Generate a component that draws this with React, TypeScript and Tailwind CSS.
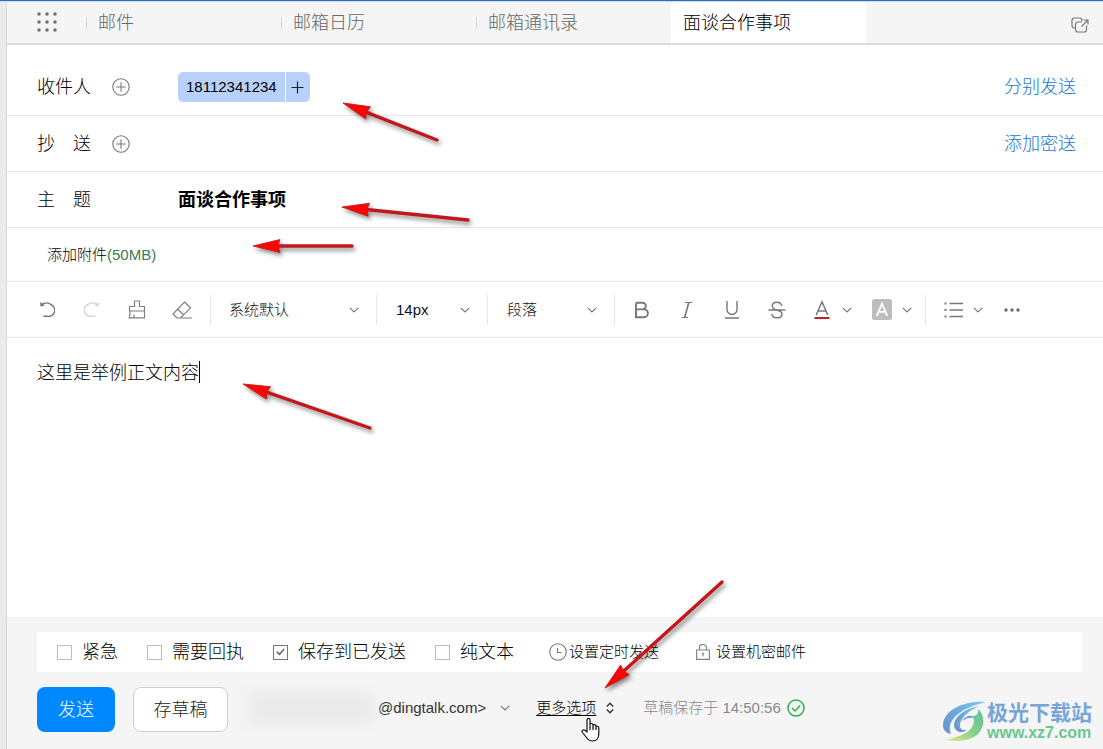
import React, { useState } from 'react';

// アイコン共通
const Chevron = ({ className = '' }: { className?: string }) => (
  <svg className={className} width="10" height="6" viewBox="0 0 10 6" fill="none" stroke="#777" strokeWidth="1.1">
    <path d="M0.8 0.8 L5 5 L9.2 0.8" />
  </svg>
);

const PlusCircle = () => (
  <svg width="18" height="18" viewBox="0 0 18 18" fill="none" stroke="#777" strokeWidth="1.1">
    <circle cx="9" cy="9" r="8.2" />
    <path d="M9 4.2 V13.8 M4.2 9 H13.8" />
  </svg>
);

const GridDots = () => (
  <svg width="20" height="20" viewBox="0 0 20 20" fill="#6b6b6b">
    {[0, 8, 16].map((y) => [0, 8, 16].map((x) => <rect key={`${x}-${y}`} x={x + 0.5} y={y + 0.5} width="3" height="3" rx="0.6" />))}
  </svg>
);

const PopOut = () => (
  <svg width="18" height="16" viewBox="0 0 18 16" fill="none" stroke="#777" strokeWidth="1.2">
    <path d="M4.5 11 H3.5 Q1 11 1 8.5 V3.5 Q1 1 3.5 1 H8.5 Q11 1 11 3.5 V4" />
    <path d="M11 5 H7 Q4.5 5 4.5 7.5 V12.5 Q4.5 15 7 15 H13 Q15.5 15 15.5 12.5 V8.5" />
    <path d="M10.5 9.5 L17 3 M12.5 3 H17 V7.5" />
  </svg>
);

interface ToolProps {
  label: string;
  children: React.ReactNode;
}

const Tool: React.FC<ToolProps> = ({ label, children }) => (
  <button type="button" aria-label={label} className="flex h-9 w-9 items-center justify-center">
    {children}
  </button>
);

const Divider = () => <span className="h-[30px] w-px bg-[#e5e5e5]" />;

interface PickerProps {
  label: string;
  options: string[];
  className: string;
}

const Picker: React.FC<PickerProps> = ({ label, options, className }) => (
  <div className={`relative flex items-center ${className}`}>
    <select aria-label={label} className="w-full appearance-none bg-transparent text-[15px] leading-6 text-[#111] outline-none">
      {options.map((o) => (
        <option key={o}>{o}</option>
      ))}
    </select>
    <Chevron className="pointer-events-none absolute right-[17px]" />
  </div>
);

interface CheckProps {
  label: string;
  defaultChecked?: boolean;
}

const Check: React.FC<CheckProps> = ({ label, defaultChecked = false }) => (
  <label className="flex items-center gap-2.5">
    <span className="grid place-items-center">
      <input
        type="checkbox"
        defaultChecked={defaultChecked}
        className="peer col-start-1 row-start-1 size-[15px] appearance-none border border-[#bdbdbd] bg-white checked:border-[#777]"
      />
      <svg className="pointer-events-none invisible col-start-1 row-start-1 peer-checked:visible" width="9" height="8" viewBox="0 0 9 8" fill="none" stroke="#666" strokeWidth="1.5">
        <path d="M0.8 3.6 L3.5 6.3 L8.2 1" />
      </svg>
    </span>
    {label}
  </label>
);

// 赤い矢印 (先端 → 末尾)
const arrows = [
  { tip: [343, 102], tail: [437, 139] },
  { tip: [342, 206], tail: [468, 219] },
  { tip: [253, 245], tail: [352, 245] },
  { tip: [243, 383], tail: [370, 427] },
  { tip: [605, 687], tail: [722, 581] },
];

const Arrows = () => (
  <svg className="pointer-events-none absolute inset-0 size-full drop-shadow-[2px_3px_2px_rgba(0,0,0,0.45)]">
    {arrows.map(({ tip, tail }) => {
      const dx = tail[0] - tip[0];
      const dy = tail[1] - tip[1];
      const angle = (Math.atan2(dy, dx) * 180) / Math.PI;
      const len = Math.hypot(dx, dy);
      return (
        <g key={tip.join()} transform={`translate(${tip[0]} ${tip[1]}) rotate(${angle})`}>
          <path d={`M22 0 H${len}`} stroke="#c3171b" strokeWidth="3.4" strokeLinecap="round" />
          <path d="M0 0 L27 -6.5 L25 0 L27 6.5 Z" fill="#fb0505" stroke="#c3171b" strokeWidth="0.8" />
        </g>
      );
    })}
  </svg>
);

const Watermark = () => (
  <div className="pointer-events-none absolute right-[11px] bottom-[7px] flex items-center gap-px">
    <svg width="44" height="41" viewBox="0 0 44 41">
      <defs>
        <linearGradient id="wmBlue" x1="0" y1="1" x2="1" y2="0">
          <stop offset="0" stopColor="#6f8fcb" />
          <stop offset="0.5" stopColor="#68a8df" />
          <stop offset="1" stopColor="#7fcdec" />
        </linearGradient>
        <linearGradient id="wmGreen" x1="0" y1="1" x2="1" y2="0">
          <stop offset="0" stopColor="#e3ea8c" />
          <stop offset="0.5" stopColor="#86d088" />
          <stop offset="1" stopColor="#62bfa0" />
        </linearGradient>
      </defs>
      <path d="M44 1 C28 -1 2 6 1 24 C1 29 4 32 9 33 C4 22 14 8 44 1 Z" fill="url(#wmBlue)" />
      <path d="M38 5 C24 7 12 15 12 25 C13 31 20 33 25 29 C20 30 17 27 18 23 C20 15 28 9 38 5 Z" fill="url(#wmBlue)" />
      <path d="M20 20 C23 15 30 13 33 17 C29 16 24 17 20 20 Z" fill="#6a9fd6" />
      <path d="M30 15 C34 20 31 27 25 31 C19 35 12 37 3 39 C20 42 36 38 40 27 C43 20 41 12 36 8 C37 12 35 15 30 15 Z" fill="url(#wmGreen)" />
    </svg>
    <div className="flex flex-col">
      <span className="text-[21px] leading-[22px] font-bold text-[#76a5da]">极光下载站</span>
      <span className="text-base leading-[18px] font-bold text-[#6cc690]">www.xz7.com</span>
    </div>
  </div>
);

const tabs = ['邮件', '邮箱日历', '邮箱通讯录'];

const App: React.FC = () => {
  const [subject, setSubject] = useState<string>('面谈合作事项');
  const [body, setBody] = useState<string>('这里是举例正文内容');

  return (
    <div className="relative flex min-h-screen flex-col border-t border-[#2f6cb3] bg-white font-['Liberation_Sans','Noto_Sans_CJK_SC',sans-serif] text-lg leading-6 font-light text-black">
      <div className="flex flex-1 border-t border-[#c9e0f7]">
        <div className="w-[7px] border-r border-[#d8d8d8] bg-[#ebebeb]" />
        <div className="flex min-w-0 flex-1 flex-col">
          {/* タブ */}
          <header className="flex h-[43px] border-b-2 border-[#dcdcdc] bg-[#f5f5f5] text-[#666]">
            <button type="button" aria-label="应用" className="flex w-[79px] items-center justify-center pb-0.5">
              <GridDots />
            </button>
            <nav className="flex">
              {tabs.map((t) => (
                <button key={t} type="button" className="flex w-[195px] items-center gap-[11px]">
                  <span className="h-3 w-px bg-[#d5d5d5]" />
                  {t}
                </button>
              ))}
              <button type="button" className="w-[195px] rounded-t-sm bg-white pl-3 text-left text-black">
                面谈合作事项
              </button>
            </nav>
            <button type="button" aria-label="新窗口" className="mr-3.5 ml-auto pt-1">
              <PopOut />
            </button>
          </header>

          {/* 宛先 */}
          <section className="flex h-[71px] items-center border-b border-[#e5e5e5] pt-3.5 pr-[27px] pl-[30px]">
            <span className="w-[75px]">收件人</span>
            <button type="button" aria-label="添加收件人" className="w-[66px]">
              <PlusCircle />
            </button>
            <div className="flex h-[30px] items-center rounded-[5px] bg-[#b7d1fa] text-[15px] font-normal">
              <span className="px-2">18112341234</span>
              <button type="button" aria-label="添加" className="flex h-full w-[25px] items-center justify-center border-l border-white">
                <svg width="13" height="13" viewBox="0 0 13 13" stroke="#222" strokeWidth="1.2">
                  <path d="M6.5 0.5 V12.5 M0.5 6.5 H12.5" />
                </svg>
              </button>
            </div>
            <a href="#" className="ml-auto text-[#1677d2]">分别发送</a>
          </section>

          {/* CC */}
          <section className="flex h-14 items-center border-b border-[#e5e5e5] pr-[27px] pl-[30px]">
            <span className="w-[75px]">抄　送</span>
            <button type="button" aria-label="添加抄送" className="w-[66px]">
              <PlusCircle />
            </button>
            <a href="#" className="ml-auto text-[#1677d2]">添加密送</a>
          </section>

          {/* 件名 */}
          <section className="flex h-14 items-center border-b border-[#e5e5e5] pr-[27px] pl-[30px]">
            <label htmlFor="subject" className="w-[141px]">主　题</label>
            <input
              id="subject"
              type="text"
              value={subject}
              onChange={(e) => setSubject(e.target.value)}
              className="flex-1 font-bold outline-none"
            />
          </section>

          <section className="flex h-[54px] items-center border-b border-[#e5e5e5] pl-10 text-[15px]">
            <button type="button">
              添加附件<span className="text-[#3d7a52]">(50MB)</span>
            </button>
          </section>

          {/* ツールバー */}
          <div className="flex h-14 items-center border-b border-[#e5e5e5] pl-[22px] text-[#777]">
            <div className="mr-2.5 flex gap-[9px]">
              <Tool label="撤销">
                <svg width="16" height="17" viewBox="0 0 16 17" fill="none" stroke="#777" strokeWidth="1.4">
                  <path d="M2.5 3.5 C5.5 1.5 9.5 1.3 12 3.5 A6.2 6.2 0 0 1 8 15.2 H4.5" />
                  <path d="M1 1 L1.5 5.6 L6 4.6 Z" fill="#777" stroke="none" />
                </svg>
              </Tool>
              <Tool label="重做">
                <svg width="16" height="17" viewBox="0 0 16 17" fill="none" stroke="#d5d5d5" strokeWidth="1.4">
                  <path d="M13.5 3.5 C10.5 1.5 6.5 1.3 4 3.5 A6.2 6.2 0 0 0 8 15.2 H11.5" />
                  <path d="M15 1 L14.5 5.6 L10 4.6 Z" fill="#d5d5d5" stroke="none" />
                </svg>
              </Tool>
              <Tool label="格式刷">
                <svg width="18" height="19" viewBox="0 0 18 19" fill="none" stroke="#808080" strokeWidth="1.2">
                  <path d="M1.5 11 V6.5 H6.5 V1 H11.5 V6.5 H16.5 V11 Z" />
                  <path d="M2 11 V14 L1.2 17.8 H16.5 V11 M6 17.5 V14.5" />
                </svg>
              </Tool>
              <Tool label="清除格式">
                <svg width="20" height="18" viewBox="0 0 20 18" fill="none" stroke="#808080" strokeWidth="1.2">
                  <path d="M12.5 1 L18.5 6.8 L8.5 17 H5 L1 13 Z M5.5 8.2 L12 14 M8 17 H20" />
                </svg>
              </Tool>
            </div>
            <Divider />
            <Picker label="字体" options={['系统默认', '宋体', '黑体']} className="w-[165px] pl-[18px]" />
            <Divider />
            <Picker label="字号" options={['14px', '16px', '18px']} className="w-[110px] pl-[19px]" />
            <Divider />
            <Picker label="段落" options={['段落', '标题 1', '标题 2']} className="w-[126px] pl-[19px]" />
            <Divider />
            <div className="mx-[9px] flex gap-[9px]">
              <Tool label="加粗">
                <svg width="16" height="18" viewBox="0 0 16 18" fill="none" stroke="#777" strokeWidth="1.9">
                  <path d="M2 1.8 H8.5 A3.3 3.3 0 0 1 8.5 8.4 H2 M8.5 8.4 H10 A3.9 3.9 0 0 1 10 16.2 H2 V1.8" />
                </svg>
              </Tool>
              <Tool label="斜体">
                <svg width="12" height="18" viewBox="0 0 12 18" fill="none" stroke="#777" strokeWidth="1.2">
                  <path d="M4 1.5 H11 M0.5 16.5 H7" />
                  <path d="M7.8 1.5 L3.6 16.5" strokeWidth="1.6" />
                </svg>
              </Tool>
              <Tool label="下划线">
                <svg width="16" height="20" viewBox="0 0 16 20" fill="none" stroke="#777" strokeWidth="1.4">
                  <path d="M3 1 V9.5 A5 5 0 0 0 13 9.5 V1 M1 18 H15" />
                </svg>
              </Tool>
              <Tool label="删除线">
                <svg width="18" height="18" viewBox="0 0 18 18" fill="none" stroke="#777" strokeWidth="1.4">
                  <path d="M13.8 5 C13.3 2.5 11.5 1.2 9 1.2 C6 1.2 4.2 2.8 4.2 5 C4.2 7.2 6 8.2 9 9 C12.5 9.9 14 10.8 14 13 C14 15.4 12 16.8 9 16.8 C6 16.8 4.2 15.4 3.9 12.8 M0.5 9 H17.5" />
                </svg>
              </Tool>
            </div>
            <Tool label="文字颜色">
              <svg width="16" height="20" viewBox="0 0 16 20" fill="none" stroke="#777" strokeWidth="1.5">
                <path d="M2.2 15 L8 1.8 L13.8 15 M4.2 11 H11.8" />
                <path d="M0.5 18 H15.5" stroke="#c81e1e" strokeWidth="2" />
              </svg>
            </Tool>
            <button type="button" aria-label="更多文字颜色" className="flex w-3.5 justify-center">
              <Chevron />
            </button>
            <span className="w-2.5" />
            <Tool label="背景颜色">
              <svg width="20" height="21" viewBox="0 0 20 21" fill="none" stroke="#fff" strokeWidth="1.8">
                <rect width="20" height="21" rx="2.5" fill="#bdbdbd" stroke="none" />
                <path d="M4.8 16.8 L10 4.6 L15.2 16.8 M6.8 12.8 H13.2" />
              </svg>
            </Tool>
            <button type="button" aria-label="更多背景颜色" className="mr-[11px] flex w-3.5 justify-center">
              <Chevron />
            </button>
            <Divider />
            <span className="w-[9px]" />
            <Tool label="列表">
              <svg width="19" height="16" viewBox="0 0 19 16" fill="none" stroke="#777" strokeWidth="1.3">
                <path d="M5.5 1.5 H19 M5.5 8 H19 M5.5 14.5 H19" />
                <path d="M0.5 1.5 H2.5 M0.5 8 H2.5 M0.5 14.5 H2.5" strokeWidth="2" />
              </svg>
            </Tool>
            <button type="button" aria-label="更多列表" className="mr-[9px] flex w-3.5 justify-center">
              <Chevron />
            </button>
            <Tool label="更多">
              <svg width="16" height="4" viewBox="0 0 16 4" fill="#6b6b6b">
                <circle cx="2" cy="2" r="1.7" />
                <circle cx="8" cy="2" r="1.7" />
                <circle cx="14" cy="2" r="1.7" />
              </svg>
            </Tool>
          </div>

          {/* 本文 */}
          <main className="flex flex-1 items-start pt-[23px] pr-6 pl-[30px]">
            <textarea
              aria-label="正文"
              rows={1}
              value={body}
              onChange={(e) => setBody(e.target.value)}
              className="field-sizing-content resize-none caret-transparent outline-none"
            />
            <span className="h-[22px] w-px bg-black" />
          </main>

          {/* フッター */}
          <footer className="flex flex-col gap-[15px] bg-[#f5f5f5] pt-[15px] pr-[21px] pb-[17px] pl-[30px]">
            <div className="flex h-10 items-center bg-white pl-5">
              <div className="flex gap-[29px]">
                <Check label="紧急" />
                <Check label="需要回执" />
                <Check label="保存到已发送" defaultChecked />
                <Check label="纯文本" />
              </div>
              <button type="button" className="ml-[35px] flex items-center gap-0.5 text-[15px]">
                <svg width="18" height="18" viewBox="0 0 18 18" fill="none" stroke="#777" strokeWidth="1.1">
                  <circle cx="9" cy="9" r="8.2" />
                  <path d="M8.5 5 V9.5 H12.5" />
                </svg>
                设置定时发送
              </button>
              <button type="button" className="ml-[37px] flex items-center gap-1.5 text-[15px]">
                <svg width="14" height="16" viewBox="0 0 14 16" fill="none" stroke="#808080" strokeWidth="1.1">
                  <path d="M0.6 6 H13.4 V15.4 H0.6 Z M3.4 6 V3.8 A3.4 3.2 0 0 1 10.6 3.8 V6 M7 8.8 V12.5 M5.8 9.2 H8.2" />
                </svg>
                设置机密邮件
              </button>
            </div>

            <div className="flex h-[45px] items-center">
              <button type="button" className="h-full w-[78px] rounded-lg bg-[#0089ff] text-white">
                发送
              </button>
              <button type="button" className="ml-[18px] h-full w-[95px] rounded-lg border border-[#cfcfcf] bg-white text-[#222]">
                存草稿
              </button>
              <div className="flex h-full items-center pb-1">
                {/* 伏せた送信者名 */}
                <span className="mr-1 ml-5 h-[34px] w-[126px] bg-[#ebebeb] blur-[6px]" />
                <button type="button" className="flex items-center gap-3.5 text-[15px] font-normal text-[#333]">
                  @dingtalk.com&gt;
                  <Chevron />
                </button>
                <a href="#" className="ml-[26px] text-[15px] underline underline-offset-2">更多选项</a>
                <svg className="ml-2.5" width="8" height="12" viewBox="0 0 8 12" fill="none" stroke="#333" strokeWidth="1.4">
                  <path d="M0.8 4.4 L4 1.2 L7.2 4.4 M0.8 7.6 L4 10.8 L7.2 7.6" />
                </svg>
                <span className="ml-[29px] text-[15px] text-[#888]">草稿保存于 14:50:56</span>
                <svg className="ml-1.5" width="18" height="18" viewBox="0 0 18 18" fill="none" stroke="#2bb24c" strokeWidth="1.5">
                  <circle cx="9" cy="9" r="8" />
                  <path d="M5 9 L8 12 L13.2 6.4" />
                </svg>
              </div>
            </div>
          </footer>
        </div>
      </div>

      <Arrows />
      {/* マウスカーソル */}
      <svg className="pointer-events-none absolute bottom-[7px] left-[581px]" width="19" height="25" viewBox="0 0 19 25" fill="#fff" stroke="#111" strokeWidth="1.2" strokeLinejoin="round">
        <path d="M6 15 V3 C6 0.8 9 0.8 9 3 V10 V7.5 C9.5 6 12 6.2 12 8 V10.5 V8.5 C12.5 7.2 15 7.4 15 9.2 V11 V10 C15.5 8.8 17.8 9 17.8 11 V16.5 C17.8 21 15.5 24 11.5 24 C8.5 24 7 22.8 5.5 20.5 L1.5 15.5 C0.2 13.5 2.4 12 4 13.3 Z" />
        <path d="M9 10 V13 M12 10.5 V13 M15 11 V13" fill="none" />
      </svg>
      <Watermark />
    </div>
  );
};

export default App;
